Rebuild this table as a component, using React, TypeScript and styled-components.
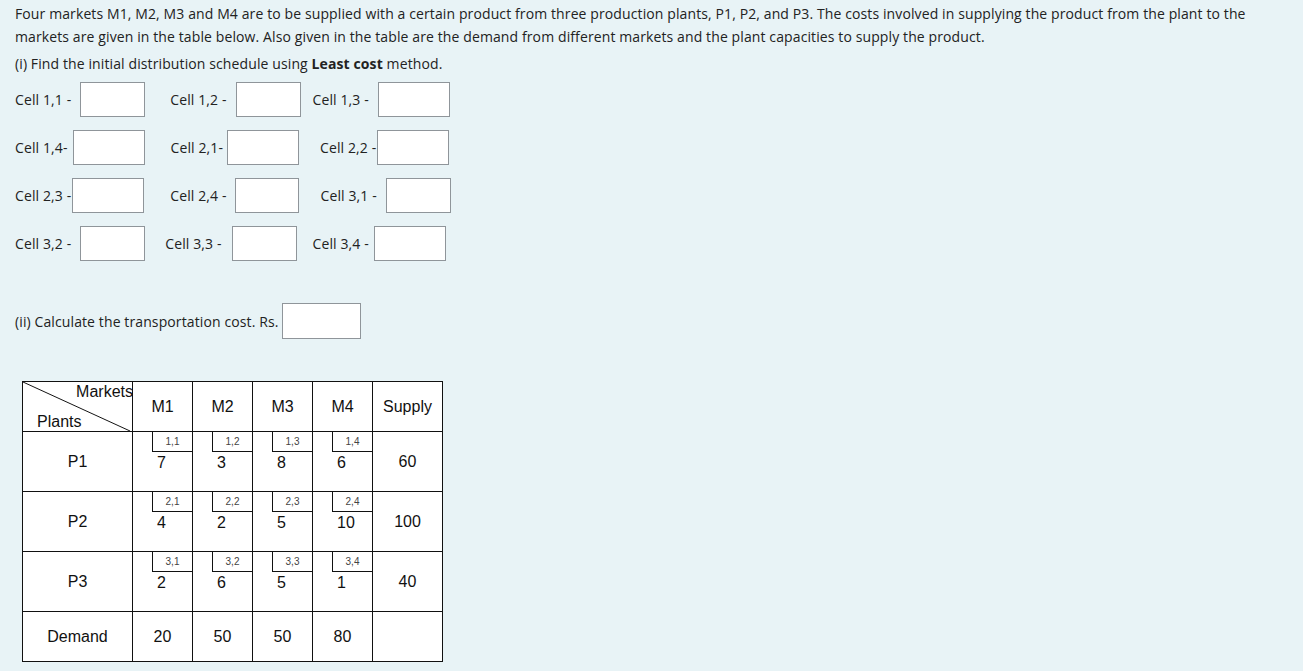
import { createGlobalStyle } from 'styled-components';
import styled from 'styled-components';

const GlobalStyle = createGlobalStyle`
  body {
    margin: 0;
    background: #e8f3f6;
    font-family: 'Open Sans', 'Noto Sans', sans-serif;
    color: #222;
  }
`;

const Page = styled.div`
  padding: 2px 15px 10px 15px;
  width: 1290px;
  box-sizing: border-box;
  font-size: 14px;
  letter-spacing: 0.11px;
`;

const Para = styled.p<{ $top?: number }>`
  margin: ${(p) => p.$top ?? 0}px 0 0 0;
  line-height: 23px;
`;

const FieldRow = styled.div<{ $top: number }>`
  display: flex;
  align-items: center;
  margin-top: ${(p) => p.$top}px;
  height: 35px;
`;

const Field = styled.label<{ $left: number }>`
  display: flex;
  align-items: center;
  margin-left: ${(p) => p.$left}px;
  white-space: nowrap;
`;

const Box = styled.input<{ $w: number; $h?: number; $gap: number }>`
  width: ${(p) => p.$w}px;
  height: ${(p) => p.$h ?? 35}px;
  box-sizing: border-box;
  border: 1px solid #8f959a;
  background: #fff;
  margin: 0 0 0 ${(p) => p.$gap}px;
  padding: 0 4px;
  outline: none;
`;

const CostLine = styled.div`
  display: flex;
  align-items: center;
  margin-top: 42px;
  height: 36px;
`;

const Grid = styled.table`
  margin: 42px 0 0 7px;
  border-collapse: collapse;
  background: #fff;
  font-family: 'Liberation Sans', Arial, sans-serif;
  font-size: 16px;
  letter-spacing: 0;
  color: #111;
`;

const Head = styled.th<{ $w: number }>`
  width: ${(p) => p.$w}px;
  height: 49px;
  border: 1px solid #111;
  font-weight: normal;
  padding: 0;
  text-align: center;
`;

const Corner = styled.th`
  position: relative;
  width: 109px;
  height: 49px;
  border: 1px solid #111;
  padding: 0;
  font-weight: normal;
`;

const CornerLine = styled.svg`
  position: absolute;
  inset: 0;
  width: 100%;
  height: 100%;
`;

const CornerTop = styled.span`
  position: absolute;
  right: -1px;
  top: 1px;
  line-height: 18px;
`;

const CornerBottom = styled.span`
  position: absolute;
  left: 14px;
  bottom: 0;
  line-height: 18px;
`;

const RowHead = styled.td<{ $h: number }>`
  height: ${(p) => p.$h}px;
  border: 1px solid #111;
  text-align: center;
  padding: 0;
`;

const CostCell = styled.td`
  height: 59px;
  border: 1px solid #111;
  padding: 0;
  vertical-align: top;
`;

const CostInner = styled.div`
  display: flex;
  flex-direction: column;
  height: 59px;
`;

const Tag = styled.div`
  align-self: flex-end;
  width: 39px;
  height: 19px;
  border-left: 1px solid #111;
  border-bottom: 1px solid #111;
  font-size: 10px;
  color: #444;
  text-align: center;
  line-height: 19px;
`;

const Cost = styled.div`
  padding-left: 24px;
  line-height: 22px;
`;

const Plain = styled.td`
  border: 1px solid #111;
  text-align: center;
  padding: 0;
`;

const rows = [
  { plant: 'P1', costs: [7, 3, 8, 6], supply: 60 },
  { plant: 'P2', costs: [4, 2, 5, 10], supply: 100 },
  { plant: 'P3', costs: [2, 6, 5, 1], supply: 40 },
];

const fields = [
  [
    { label: 'Cell 1,1 -', left: 0, gap: 9, w: 65 },
    { label: 'Cell 1,2 -', left: 25, gap: 9, w: 65 },
    { label: 'Cell 1,3 -', left: 12, gap: 9, w: 72 },
  ],
  [
    { label: 'Cell 1,4-', left: 0, gap: 5, w: 72 },
    { label: 'Cell 2,1-', left: 26, gap: 4, w: 72 },
    { label: 'Cell 2,2 -', left: 21, gap: 1, w: 72 },
  ],
  [
    { label: 'Cell 2,3 -', left: 0, gap: 1, w: 72 },
    { label: 'Cell 2,4 -', left: 26, gap: 8, w: 64 },
    { label: 'Cell 3,1 -', left: 22, gap: 9, w: 65 },
  ],
  [
    { label: 'Cell 3,2 -', left: 0, gap: 9, w: 65 },
    { label: 'Cell 3,3 -', left: 20, gap: 10, w: 65 },
    { label: 'Cell 3,4 -', left: 16, gap: 5, w: 72 },
  ],
];

export default function App() {
  return (
    <>
      <GlobalStyle />
      <Page>
        <Para>
          Four markets M1, M2, M3 and M4 are to be supplied with a certain product from three
          production plants, P1, P2, and P3. The costs involved in supplying the product from the
          plant to the markets are given in the table below. Also given in the table are the demand
          from different markets and the plant capacities to supply the product.
        </Para>
        <Para $top={4}>
          (i) Find the initial distribution schedule using <b>Least cost</b> method.
        </Para>
        {fields.map((row, i) => (
          <FieldRow key={i} $top={i === 0 ? 7 : 13}>
            {row.map((f) => (
              <Field key={f.label} $left={f.left}>
                {f.label}
                <Box $w={f.w} $gap={f.gap} />
              </Field>
            ))}
          </FieldRow>
        ))}
        <CostLine>
          <Field $left={0}>
            (ii) Calculate the transportation cost. Rs.
            <Box $w={79} $h={36} $gap={4} />
          </Field>
        </CostLine>
        <Grid>
          <thead>
            <tr>
              <Corner>
                <CornerLine viewBox="0 0 110 49" preserveAspectRatio="none">
                  <line x1="0" y1="0" x2="108" y2="49" stroke="#111" strokeWidth="1" />
                </CornerLine>
                <CornerTop>Markets</CornerTop>
                <CornerBottom>Plants</CornerBottom>
              </Corner>
              <Head $w={59}>M1</Head>
              <Head $w={59}>M2</Head>
              <Head $w={59}>M3</Head>
              <Head $w={59}>M4</Head>
              <Head $w={69}>Supply</Head>
            </tr>
          </thead>
          <tbody>
            {rows.map((r, i) => (
              <tr key={r.plant}>
                <RowHead $h={59}>{r.plant}</RowHead>
                {r.costs.map((c, j) => (
                  <CostCell key={j}>
                    <CostInner>
                      <Tag>
                        {i + 1},{j + 1}
                      </Tag>
                      <Cost>{c}</Cost>
                    </CostInner>
                  </CostCell>
                ))}
                <Plain>{r.supply}</Plain>
              </tr>
            ))}
            <tr>
              <RowHead $h={49}>Demand</RowHead>
              <Plain>20</Plain>
              <Plain>50</Plain>
              <Plain>50</Plain>
              <Plain>80</Plain>
              <Plain />
            </tr>
          </tbody>
        </Grid>
      </Page>
    </>
  );
}
